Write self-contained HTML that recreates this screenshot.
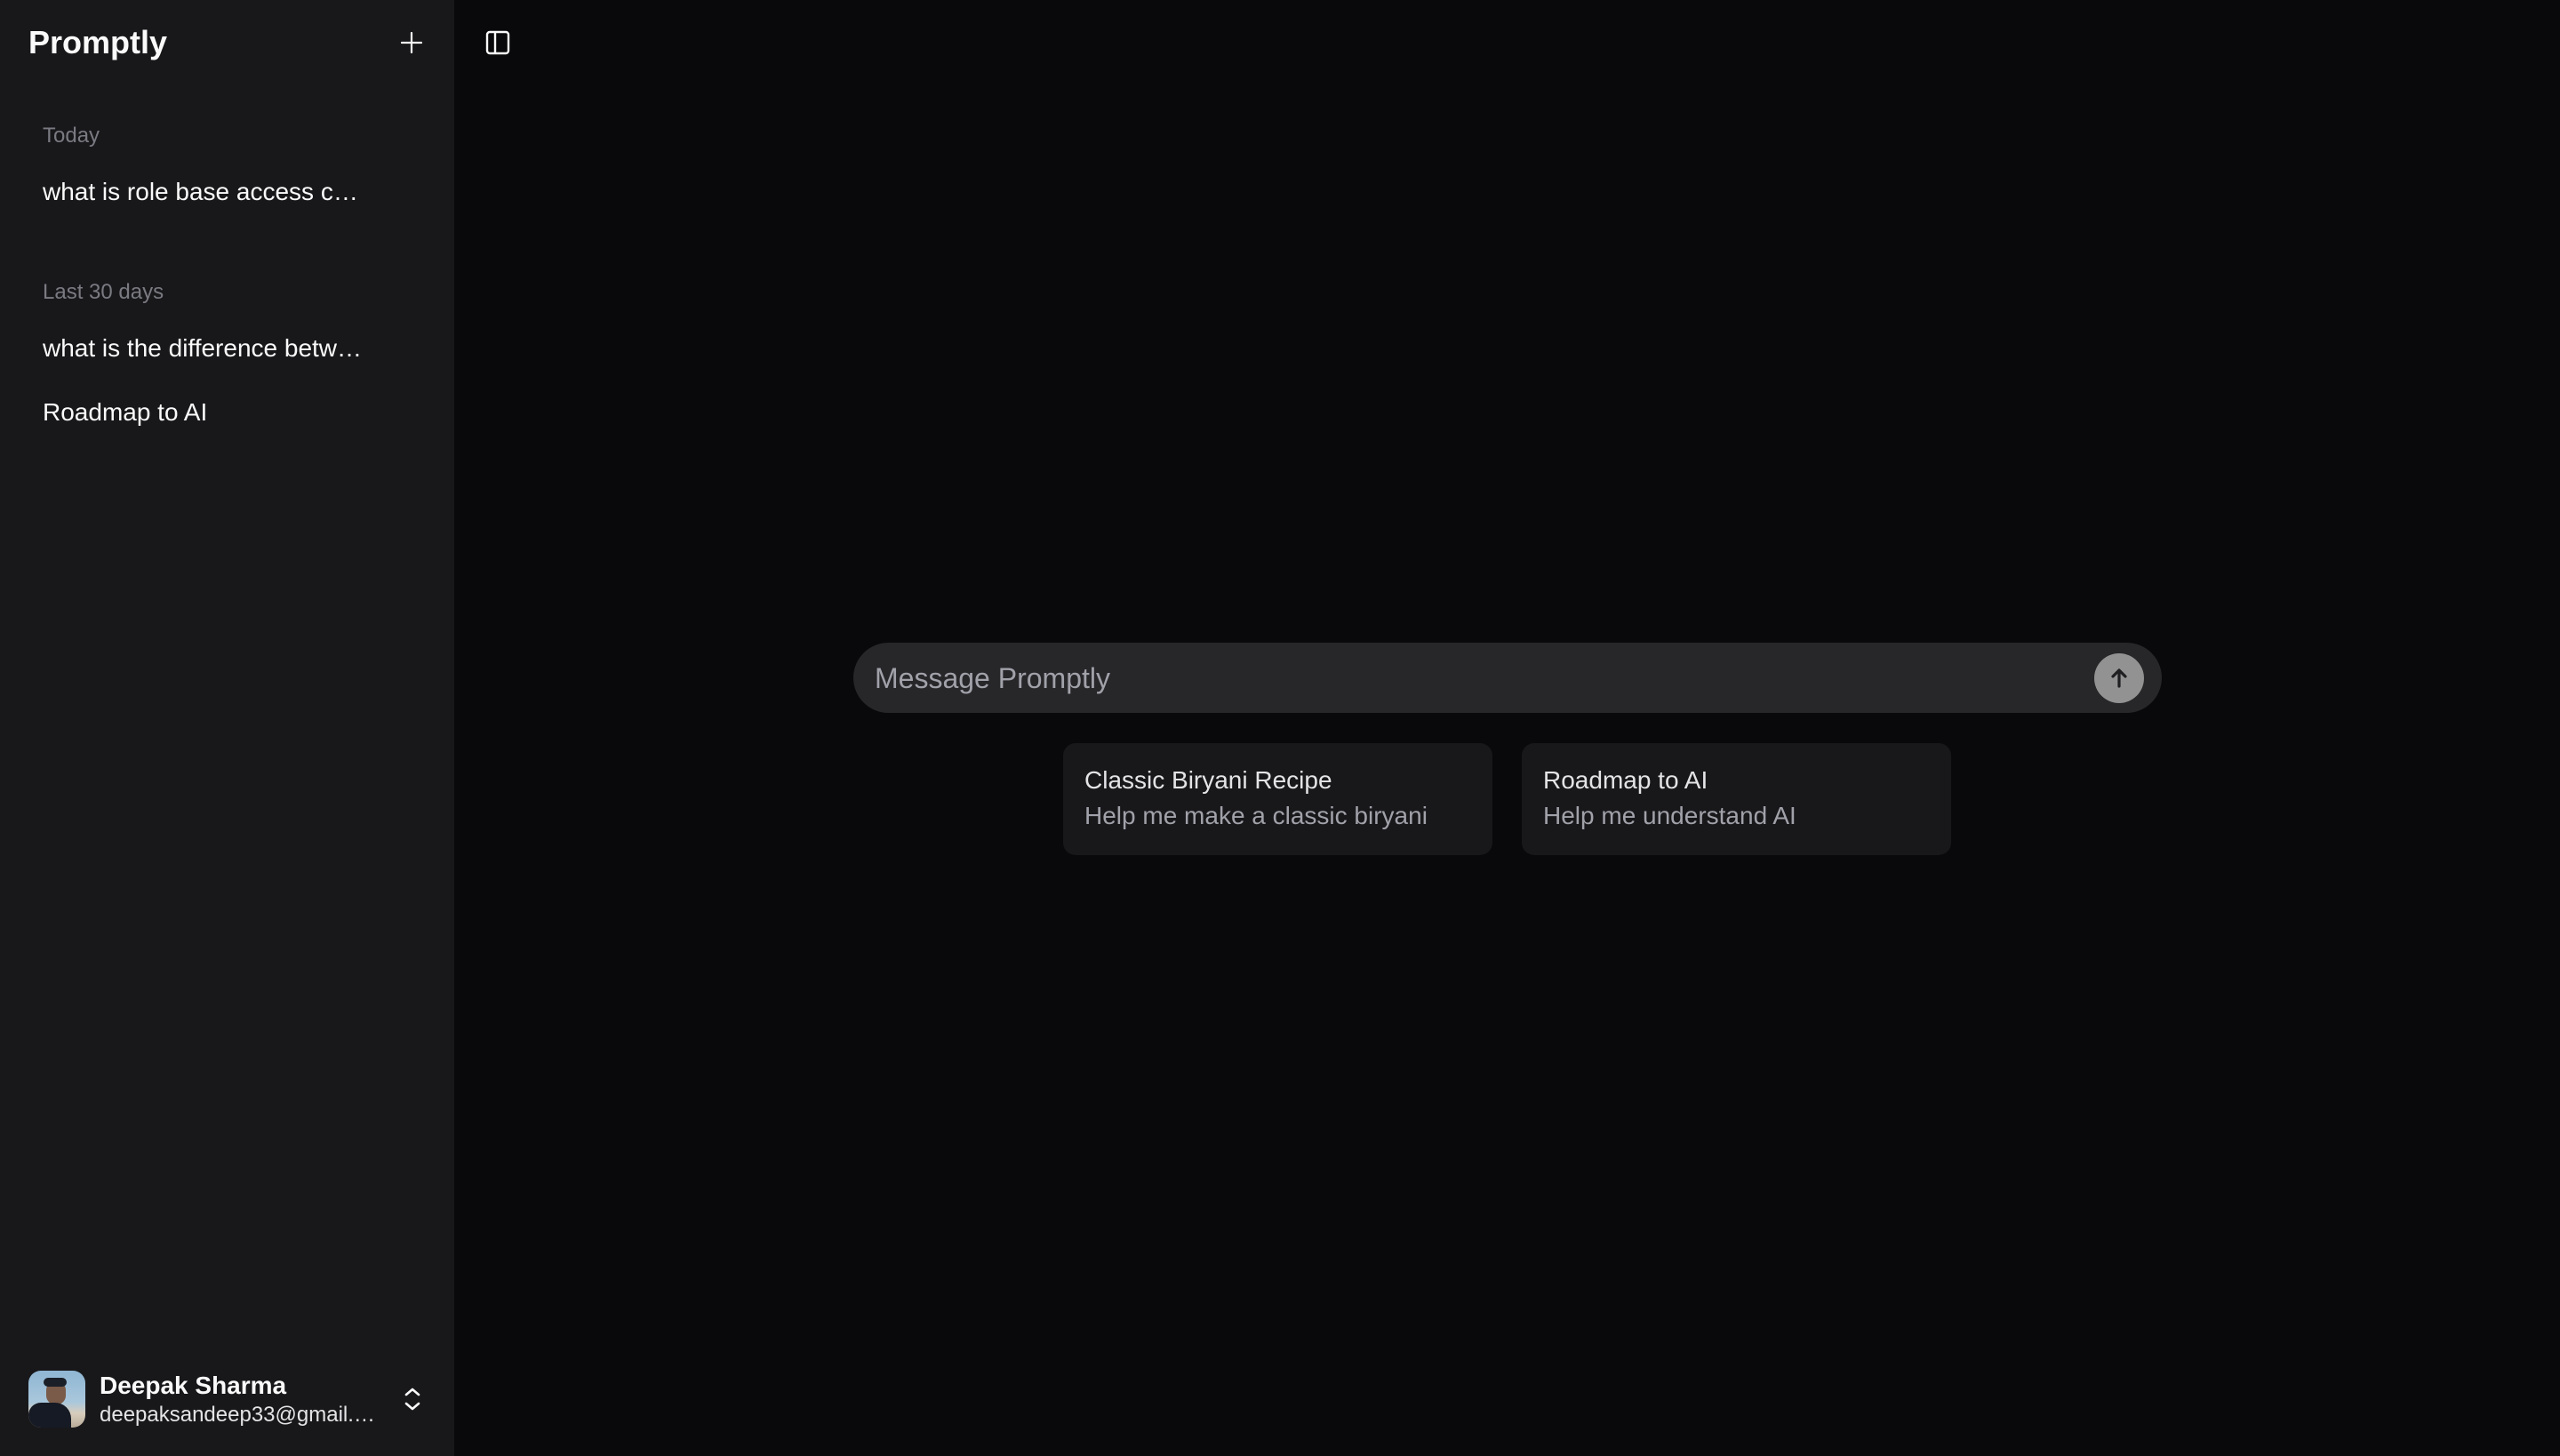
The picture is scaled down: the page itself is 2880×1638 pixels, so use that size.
<!DOCTYPE html>
<html><head><meta charset="utf-8"><style>
*{margin:0;padding:0;box-sizing:border-box}
html,body{width:2880px;height:1638px;overflow:hidden;background:#09090b;font-family:"Liberation Sans",sans-serif}
.sb{position:absolute;left:0;top:0;width:511px;height:1638px;background:#18181b}
.t{position:absolute;white-space:nowrap;line-height:1}
.card{position:absolute;top:836px;width:483px;height:126px;background:#18181b;border-radius:14px}
</style></head><body>
<div class="sb">
<div class="t" style="left:32px;top:30px;font-size:36px;font-weight:bold;color:#fafafa">Promptly</div>
<svg style="position:absolute;left:451px;top:36px" width="24" height="24" viewBox="0 0 24 24"><path d="M12 1v22M1 12h22" stroke="#fafafa" stroke-width="2.2" stroke-linecap="round"/></svg>
<div class="t" style="left:48px;top:141px;font-size:24px;color:#7a7a82">Today</div>
<div class="t" style="left:48px;top:202px;font-size:28px;color:#fafafa">what is role base access c…</div>
<div class="t" style="left:48px;top:317px;font-size:24px;color:#7a7a82">Last 30 days</div>
<div class="t" style="left:48px;top:378px;font-size:28px;color:#fafafa">what is the difference betw…</div>
<div class="t" style="left:48px;top:450px;font-size:28px;color:#fafafa">Roadmap to AI</div>
<div style="position:absolute;left:32px;top:1542px;width:64px;height:64px;border-radius:14px;overflow:hidden;background:linear-gradient(180deg,#8fb6d3 0%,#a9c7dc 55%,#d8cdbc 75%,#b8ab98 100%)">
<div style="position:absolute;left:20px;top:12px;width:22px;height:26px;border-radius:10px;background:#7a5a48"></div>
<div style="position:absolute;left:17px;top:8px;width:26px;height:10px;border-radius:6px;background:#1b1f28"></div>
<div style="position:absolute;left:0;top:36px;width:48px;height:40px;border-radius:14px 18px 0 0;background:#161a24"></div>
</div>
<div class="t" style="left:112px;top:1545px;font-size:28px;font-weight:bold;color:#fafafa">Deepak Sharma</div>
<div class="t" style="left:112px;top:1580px;font-size:24px;color:#e4e4e7">deepaksandeep33@gmail.…</div>
<svg style="position:absolute;left:452px;top:1560px" width="24" height="28" viewBox="0 0 24 28"><path d="M5 9l7-6 7 6M5 19l7 6 7-6" fill="none" stroke="#fafafa" stroke-width="2.6" stroke-linecap="round" stroke-linejoin="round"/></svg>
</div>
<svg style="position:absolute;left:546px;top:34px" width="28" height="28" viewBox="0 0 28 28"><rect x="2" y="2" width="24" height="24" rx="3" fill="none" stroke="#fafafa" stroke-width="2.4"/><path d="M11 2v24" stroke="#fafafa" stroke-width="2.4"/></svg>
<div style="position:absolute;left:960px;top:723px;width:1472px;height:79px;border-radius:40px;background:#27272a"></div>
<div class="t" style="left:984px;top:747px;font-size:32px;color:#a1a1aa">Message Promptly</div>
<div style="position:absolute;left:2356px;top:735px;width:56px;height:56px;border-radius:50%;background:#929292"></div>
<svg style="position:absolute;left:2370px;top:749px" width="28" height="28" viewBox="0 0 28 28"><path d="M14 23V6M7 12l7-7 7 7" fill="none" stroke="#1f1f22" stroke-width="3.2" stroke-linecap="round" stroke-linejoin="round"/></svg>
<div class="card" style="left:1196px"></div>
<div class="card" style="left:1712px"></div>
<div class="t" style="left:1220px;top:864px;font-size:28px;color:#e4e4e7">Classic Biryani Recipe</div>
<div class="t" style="left:1220px;top:904px;font-size:28px;color:#a1a1aa">Help me make a classic biryani</div>
<div class="t" style="left:1736px;top:864px;font-size:28px;color:#e4e4e7">Roadmap to AI</div>
<div class="t" style="left:1736px;top:904px;font-size:28px;color:#a1a1aa">Help me understand AI</div>
</body></html>
